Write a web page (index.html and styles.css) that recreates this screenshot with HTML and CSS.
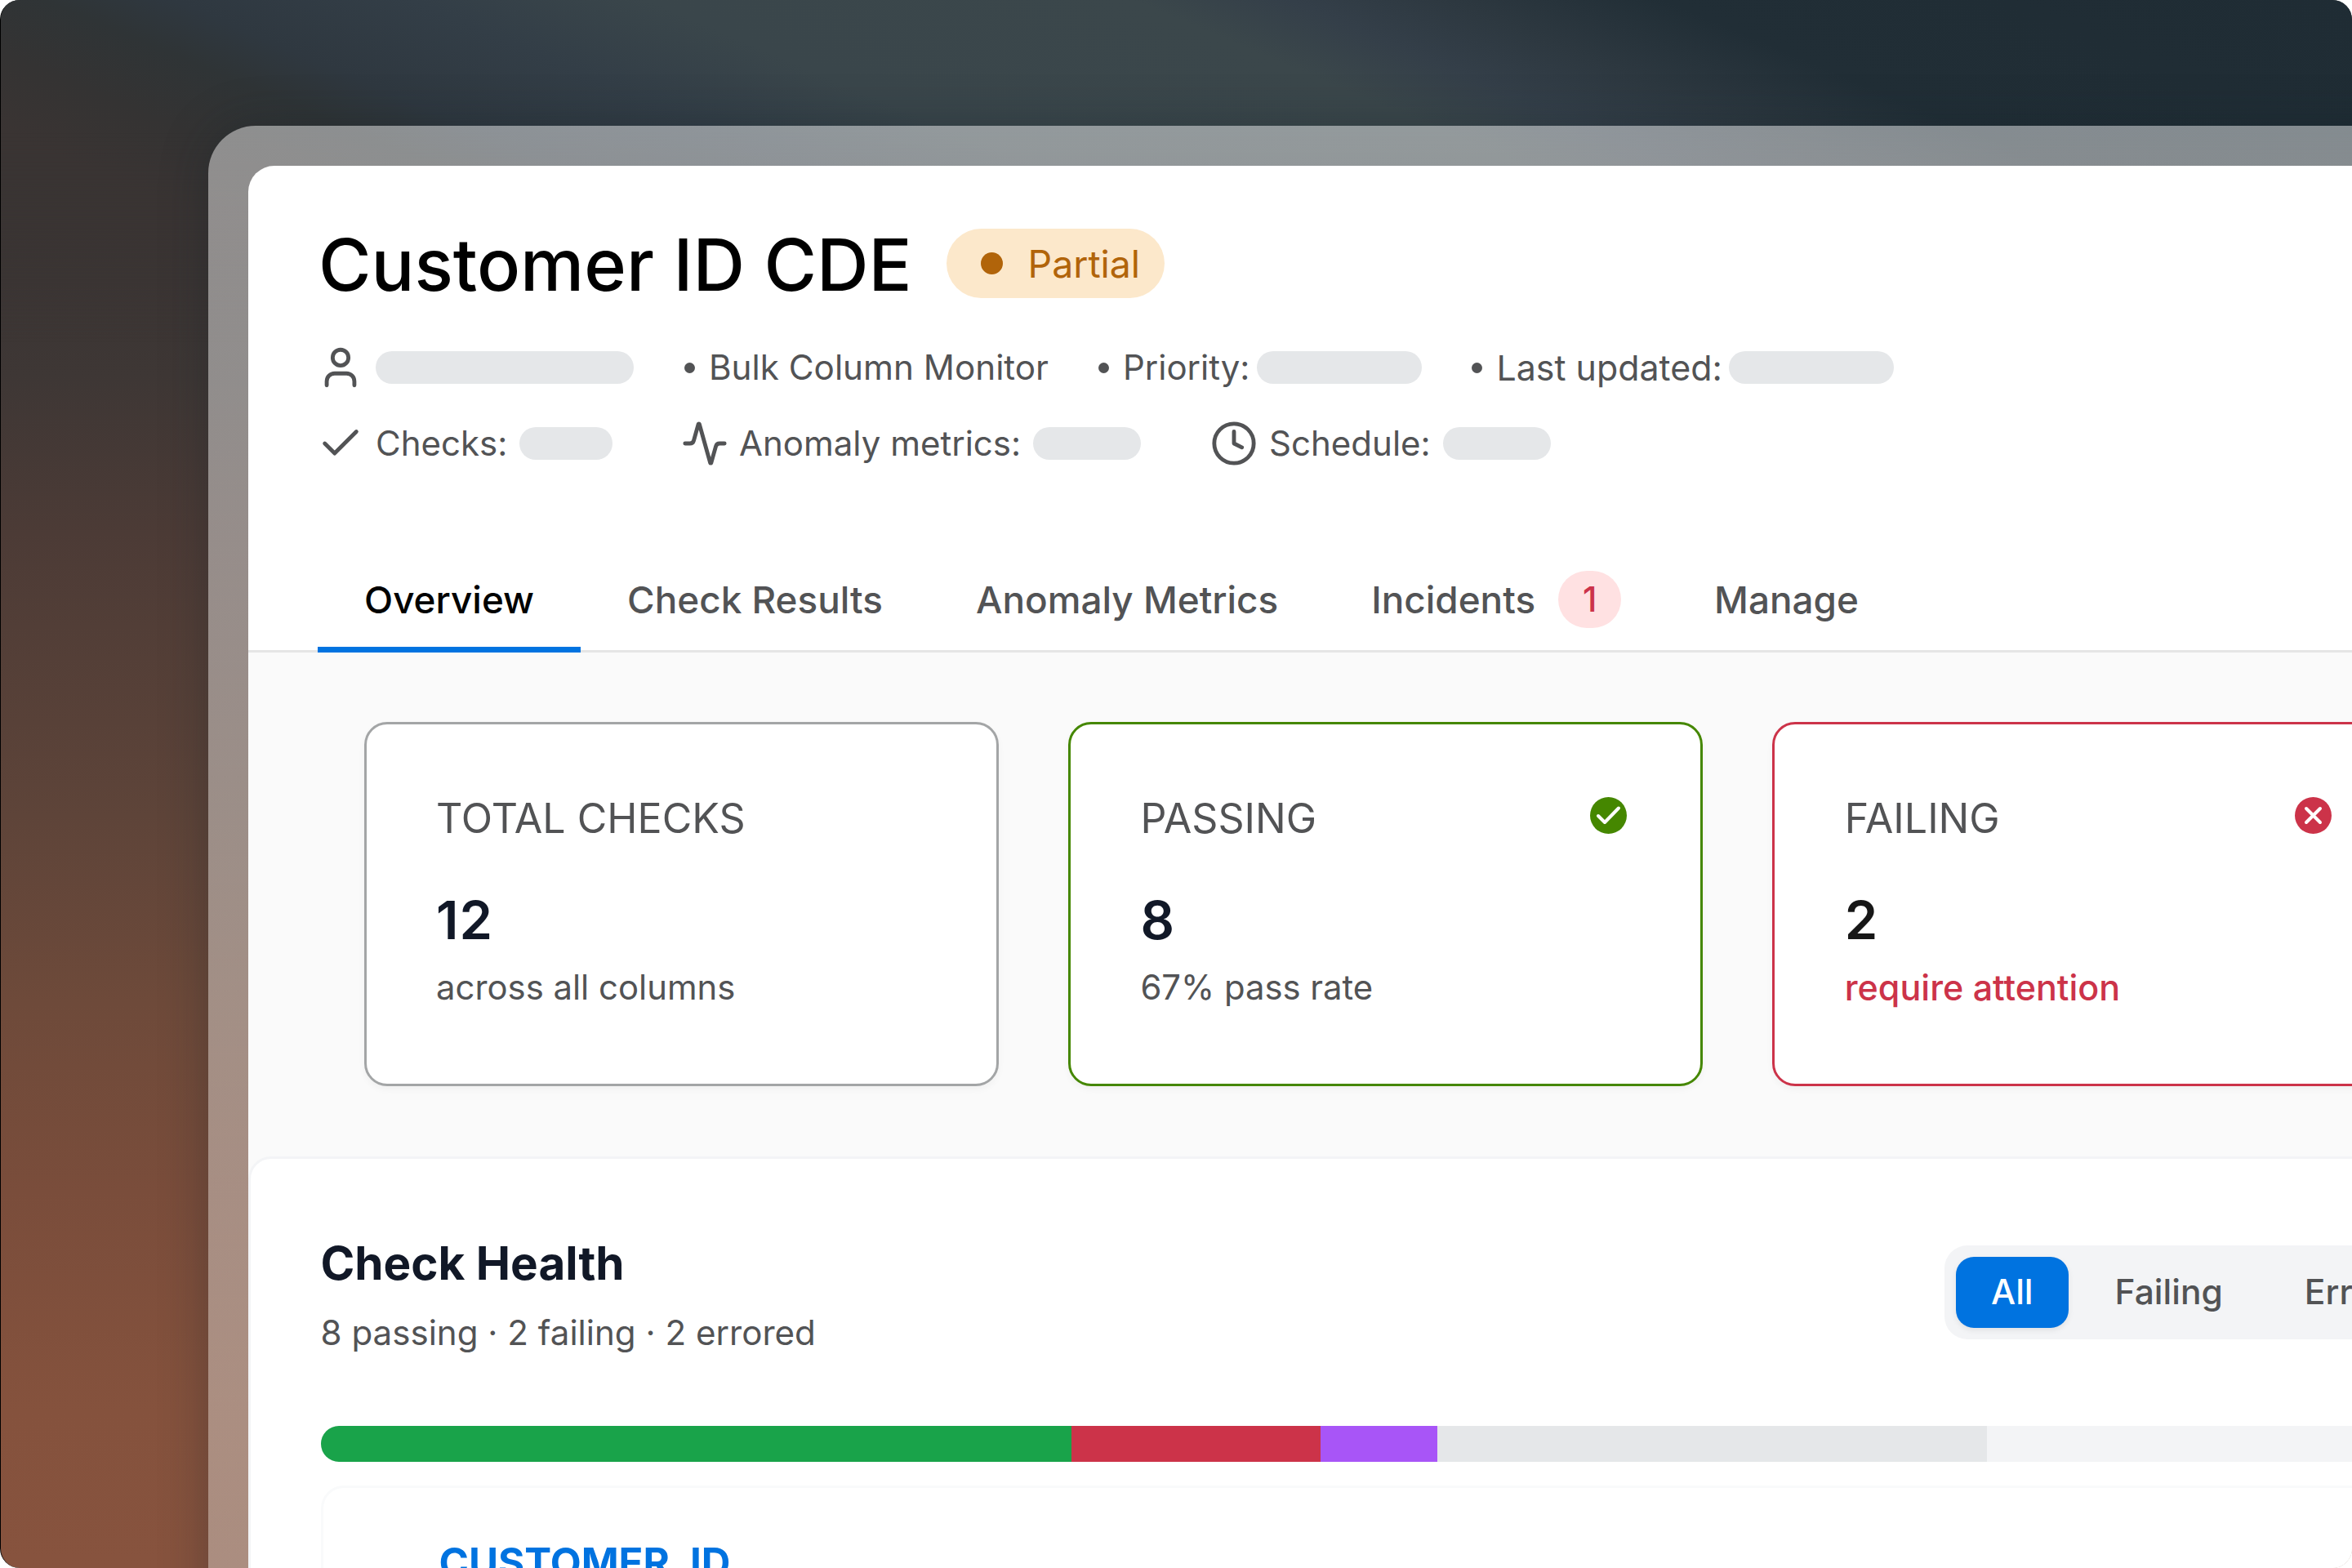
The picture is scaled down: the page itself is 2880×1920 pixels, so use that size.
FILE: index.html
```html
<!DOCTYPE html>
<html lang="en">
<head>
    <meta charset="utf-8" />
    <meta name="viewport" content="width=device-width, initial-scale=1.0" />
    <title>Customer ID CDE</title>
    <link rel="stylesheet" href="styles.css">
</head>
<body>
<div class="stage">
    <div class="frame">
        <div class="window">
            <header class="header">
                <div class="title-row">
                    <h1>Customer ID CDE</h1>
                    <span class="status"><i class="status-dot"></i>Partial</span>
                </div>
                <div class="meta">
                    <div class="meta-item col-1">
                        <svg class="icon" viewBox="0 0 24 24"><circle cx="12" cy="7" r="4"/><path d="M19 21v-2a4 4 0 0 0-4-4H9a4 4 0 0 0-4 4v2"/></svg>
                        <span class="skeleton w-owner"></span>
                    </div>
                    <div class="meta-item bulk"><i class="bullet"></i><span>Bulk Column Monitor</span></div>
                    <div class="meta-item priority"><i class="bullet"></i><span>Priority:</span><span class="skeleton w-lg"></span></div>
                    <div class="meta-item updated"><i class="bullet"></i><span>Last updated:</span><span class="skeleton w-lg"></span></div>
                </div>
                <div class="meta second">
                    <div class="meta-item col-1">
                        <svg class="icon" viewBox="0 0 24 24"><path d="M20 6 9 17l-5-5"/></svg>
                        <span>Checks:</span><span class="skeleton w-sm"></span>
                    </div>
                    <div class="meta-item anomaly">
                        <svg class="icon" viewBox="0 0 24 24"><path d="M22 12h-2.480a2 2 0 0 0-1.930 1.460l-2.350 8.360a.25.25 0 0 1-.48 0L9.240 2.180a.25.25 0 0 0-.48 0l-2.350 8.360A2 2 0 0 1 4.490 12H2"/></svg>
                        <span>Anomaly metrics:</span><span class="skeleton w-md"></span>
                    </div>
                    <div class="meta-item schedule">
                        <svg class="icon" viewBox="0 0 24 24"><circle cx="12" cy="12" r="10"/><path d="M12 6v6l4 2"/></svg>
                        <span>Schedule:</span><span class="skeleton w-md"></span>
                    </div>
                </div>
            </header>

            <nav class="tabs">
                <a class="tab active">Overview</a>
                <a class="tab">Check Results</a>
                <a class="tab">Anomaly Metrics</a>
                <a class="tab">Incidents<span class="count">1</span></a>
                <a class="tab">Manage</a>
            </nav>

            <section class="cards">
                <div class="card">
                    <div class="card-head">TOTAL CHECKS</div>
                    <div class="card-num">12</div>
                    <div class="card-note">across all columns</div>
                </div>
                <div class="card passing">
                    <div class="card-head">PASSING
                        <svg class="card-icon" viewBox="0 0 45 45"><circle cx="22.500" cy="22.500" r="22.500"/><path d="M10 23 18 31 35 13.500"/></svg>
                    </div>
                    <div class="card-num">8</div>
                    <div class="card-note">67% pass rate</div>
                </div>
                <div class="card failing">
                    <div class="card-head">FAILING
                        <svg class="card-icon" viewBox="0 0 45 45"><circle cx="22.500" cy="22.500" r="22.500"/><path d="M14 14 31 31M31 14 14 31"/></svg>
                    </div>
                    <div class="card-num">2</div>
                    <div class="card-note">require attention</div>
                </div>
            </section>

            <section class="health">
                <div class="health-head">
                    <div>
                        <h2>Check Health</h2>
                        <p>8 passing · 2 failing · 2 errored</p>
                    </div>
                    <div class="filter">
                        <span class="filter-item on">All</span>
                        <span class="filter-item">Failing</span>
                        <span class="filter-item">Errored</span>
                    </div>
                </div>
                <div class="bar">
                    <i class="seg green"></i><i class="seg red"></i><i class="seg purple"></i><i class="seg gray"></i>
                </div>
                <div class="column-card">CUSTOMER_ID</div>
            </section>
        </div>
    </div>
</div>
</body>
</html>
```

FILE: styles.css
```css
*{margin:0;padding:0;box-sizing:border-box;}
html,body{width:2880px;height:1920px;overflow:hidden;background:#fff;}
body{font-family:Inter,"Liberation Sans",sans-serif;color:#525355;}

/* backdrop */
.stage{
    position:relative;
    width:2880px;
    height:1920px;
    padding:154px 0 0 254px;
    overflow:hidden;
    border-radius:24px;
    border-left:1px solid #000;
    background:linear-gradient(180deg,#2f3436 0,#393433 14%,#3e3735 24%,#4c3b36 34%,#5e4439 52%,#6e4a3a 64%,#7a4d3b 76%,#85523d 90%,#87533e 100%);
}
/* diagonal light across the top, fading into the warm side */
.stage::before{
    content:"";
    position:absolute;
    left:0;
    top:0;
    width:2880px;
    height:420px;
    background:linear-gradient(23deg,#3a3433 15.800%,#343333 21.700%,#2f3436 27%,#2f3840 31%,#333e47 38.600%,#3a464b 46%,#3b474b 61.400%,#343f49 66.400%,#2d3840 71.500%,#212e36 78.200%,#1f2c34 100%);
    -webkit-mask-image:linear-gradient(180deg,#000 160px,transparent 420px);
    mask-image:linear-gradient(180deg,#000 160px,transparent 420px);
}
.frame{
    position:relative;
    width:2800px;
    height:1900px;
    padding:49px 0 0 49px;
    border-radius:58px 0 0 0;
    background:linear-gradient(180deg,rgba(255,255,255,.45) 0,rgba(235,245,245,.36) 90%);
    box-shadow:0 0 60px rgba(15,30,38,.3);
}
.window{
    width:2751px;
    height:1860px;
    overflow:hidden;
    border-radius:32px 0 0 0;
    background:#fff;
}

/* header */
.header{height:592px;padding:77px 0 0 86px;}
.title-row{display:flex;align-items:center;height:85px;gap:42px;}
h1{padding-top:3px;font-size:88px;line-height:85px;font-weight:500;color:#000;}
.status{
    display:flex;
    align-items:center;
    gap:31px;
    width:267px;
    height:85px;
    padding-left:42px;
    border-radius:43px;
    background:#fce8cb;
    color:#b1640a;
    font-size:46.400px;
}
.status-dot{width:27px;height:27px;border-radius:50%;background:#b1640a;}
.meta{display:flex;align-items:center;height:54px;margin-top:58px;font-size:42px;line-height:52px;white-space:nowrap;}
.second{margin-top:39px;}
.meta-item{display:flex;align-items:center;height:54px;}
.col-1{width:448px;}
.second .col-1{width:444px;}
.bullet{width:13px;height:13px;margin-right:17px;border-radius:50%;background:#525355;}
.bulk{font-size:42.200px;}
.skeleton{height:40px;border-radius:20px;background:#e5e7e9;}
.w-owner{width:316px;}
.w-lg{width:202px;margin-left:9px;}
.w-sm{width:114px;margin-left:15px;}
.w-md{width:132px;margin-left:15px;}
.priority,.updated{margin-left:61px;}
.updated{font-size:42.900px;}
.updated .w-lg{margin-left:8px;}
.schedule{margin-left:85px;}
.icon{
    flex:none;
    width:58px;
    height:58px;
    margin-right:13px;
    fill:none;
    stroke:#525355;
    stroke-width:2;
    stroke-linecap:round;
    stroke-linejoin:round;
}
.schedule .icon{margin-right:14px;}
.col-1 .icon{margin-left:-2px;margin-right:14px;}

/* tabs */
.tabs{
    display:flex;
    height:124px;
    margin-top:-120px;
    padding-left:85px;
    border-bottom:3px solid #e5e5e5;
}
.tab{
    display:flex;
    align-items:center;
    height:124px;
    padding:1px 57px 0;
    font-size:45.850px;
    font-weight:500;
    border-bottom:7px solid transparent;
    white-space:nowrap;
}
.tab.active{color:#000;border-bottom-color:#0073e0;}
.count{
    flex:none;
    width:77px;
    height:70px;
    margin-left:28px;
    border-radius:36px;
    background:#ffe1e2;
    color:#cc3349;
    font-size:42px;
    line-height:70px;
    text-align:center;
}

/* summary cards */
.cards{
    display:flex;
    gap:84.800px;
    height:657px;
    padding:85px 0 0 141.500px;
    background:#fafafa;
}
.card{
    flex:none;
    width:777.600px;
    height:446px;
    padding:86px 90px 0 85.500px;
    border:3px solid #a3a5a6;
    border-radius:28px;
    background:#fff;
    box-shadow:0 4px 8px rgba(0,0,0,.04);
}
.card-head{display:flex;justify-content:space-between;height:58px;font-size:50.100px;line-height:58px;}
.card-icon{width:45px;height:45px;margin-top:3px;fill:#458700;}
.card-icon path{fill:none;stroke:#fff;stroke-width:4;stroke-linecap:round;stroke-linejoin:round;}
.card-num{height:80px;margin-top:56px;font-size:65px;line-height:80px;font-weight:600;letter-spacing:1px;color:#111827;}
.card-note{margin-top:15px;font-size:41.850px;line-height:54px;}
.passing{border-color:#458700;}
.failing{border-color:#cc3349;}
.failing .card-icon{fill:#cc3349;}
.failing .card-num{color:#171717;}
.failing .card-note{font-size:43px;font-weight:500;color:#cc3349;}

/* check health */
.health{
    height:520px;
    margin-top:-40px;
    padding:106px 0 0 85.500px;
    border:3px solid #f3f4f6;
    border-radius:28px 0 0 0;
    background:#fff;
}
.health-head{display:flex;justify-content:space-between;height:221px;}
h2{font-size:56.600px;line-height:44px;font-weight:700;color:#111827;}
.health p{margin-top:36px;font-size:42.100px;line-height:54px;}
.filter{
    display:flex;
    flex:none;
    width:671px;
    height:115px;
    padding:14px;
    border-radius:28px;
    background:#f3f4f6;
    font-size:42.500px;
    font-weight:500;
}
.filter-item{height:87px;padding:0 43px;margin-right:14px;border-radius:22px;line-height:86px;}
.filter-item.on{background:#0073e0;color:#fff;box-shadow:0 3px 7px rgba(0,0,0,.08);}
.bar{display:flex;height:44px;border-radius:22px 0 0 22px;overflow:hidden;background:#f3f4f6;}
.green{width:919px;background:#19a34a;}
.red{width:305px;background:#cc3349;}
.purple{width:143px;background:#a855f7;}
.gray{width:673px;background:#e5e7e9;}
.column-card{
    height:200px;
    margin-top:29px;
    padding:61px 142px;
    border:3px solid #f9fafb;
    border-radius:28px 0 0 0;
    font-size:49.300px;
    line-height:60px;
    font-weight:700;
    color:#0073e0;
}
```
